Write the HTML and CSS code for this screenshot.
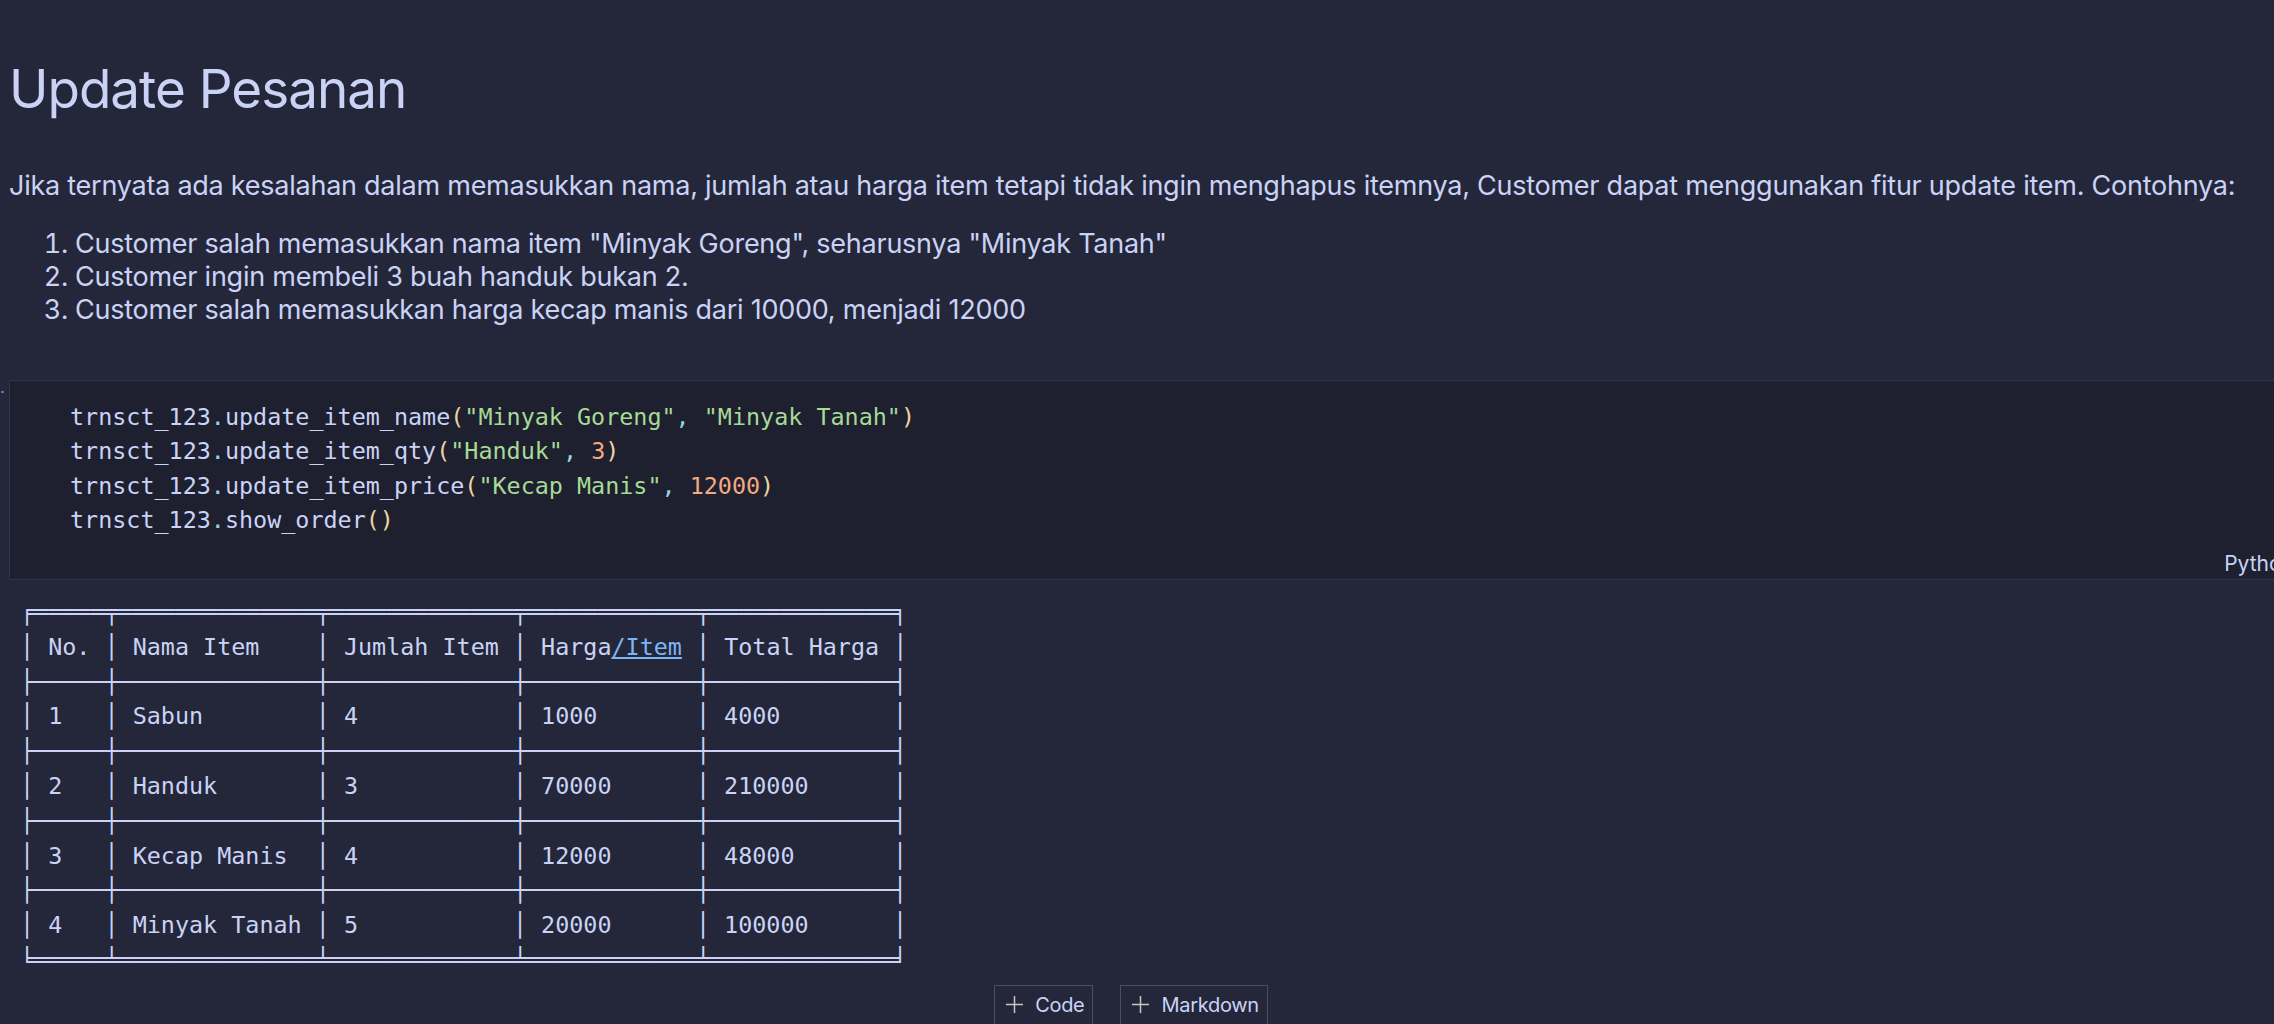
FILE: index.html
```html
<!DOCTYPE html>
<html lang="id">
<head>
<meta charset="utf-8">
<title>Update Pesanan</title>
<link rel="stylesheet" href="styles.css">
</head>
<body>
<div class="nb">
  <section class="md">
    <h1 class="title">Update Pesanan</h1>
    <p class="para">Jika ternyata ada kesalahan dalam memasukkan nama, jumlah atau harga item tetapi tidak ingin menghapus itemnya, Customer dapat menggunakan fitur update item. Contohnya:</p>
    <ol class="steps">
      <li>Customer salah memasukkan nama item "Minyak Goreng", seharusnya "Minyak Tanah"</li>
      <li>Customer ingin membeli 3 buah handuk bukan 2.</li>
      <li>Customer salah memasukkan harga kecap manis dari 10000, menjadi 12000</li>
    </ol>
  </section>

  <section class="code-cell">
    <span class="gutter-mark"></span>
    <pre class="code">trnsct_123<span class="p">.</span>update_item_name<span class="b">(</span><span class="s">"Minyak Goreng"</span><span class="p">,</span> <span class="s">"Minyak Tanah"</span><span class="b">)</span>
trnsct_123<span class="p">.</span>update_item_qty<span class="b">(</span><span class="s">"Handuk"</span><span class="p">,</span> <span class="n">3</span><span class="b">)</span>
trnsct_123<span class="p">.</span>update_item_price<span class="b">(</span><span class="s">"Kecap Manis"</span><span class="p">,</span> <span class="n">12000</span><span class="b">)</span>
trnsct_123<span class="p">.</span>show_order<span class="b">()</span></pre>
    <div class="cell-status"><span class="lang">Python</span></div>
  </section>

  <pre class="output">╒═════╤══════════════╤═════════════╤════════════╤═════════════╕
│ No. │ Nama Item    │ Jumlah Item │ Harga<span class="link">/Item</span> │ Total Harga │
├─────┼──────────────┼─────────────┼────────────┼─────────────┤
│ 1   │ Sabun        │ 4           │ 1000       │ 4000        │
├─────┼──────────────┼─────────────┼────────────┼─────────────┤
│ 2   │ Handuk       │ 3           │ 70000      │ 210000      │
├─────┼──────────────┼─────────────┼────────────┼─────────────┤
│ 3   │ Kecap Manis  │ 4           │ 12000      │ 48000       │
├─────┼──────────────┼─────────────┼────────────┼─────────────┤
│ 4   │ Minyak Tanah │ 5           │ 20000      │ 100000      │
╘═════╧══════════════╧═════════════╧════════════╧═════════════╛</pre>

  <div class="add-row">
    <button class="add-btn" type="button">
      <svg class="plus" viewBox="0 0 20 20" width="20" height="20" aria-hidden="true"><path d="M10 1v18M1 10h18" /></svg>
      <span>Code</span>
    </button>
    <button class="add-btn" type="button">
      <svg class="plus" viewBox="0 0 20 20" width="20" height="20" aria-hidden="true"><path d="M10 1v18M1 10h18" /></svg>
      <span>Markdown</span>
    </button>
  </div>
</div>
</body>
</html>
```

FILE: styles.css
```css
html, body {
  margin: 0;
  padding: 0;
}

body {
  background: #24273a;
  color: #cad3f5;
  font-family: Inter, "Noto Sans", sans-serif;
  overflow: hidden;
  width: 2274px;
  height: 1024px;
}

.nb {
  padding-left: 9px;
}

.md {
  padding-top: 51px;
}

.title {
  margin: 0;
  font-size: 53px;
  font-weight: 400;
  line-height: 77px;
  letter-spacing: -1px;
  color: #cad3f5;
}

.para {
  margin: 41px 0 0;
  font-size: 27px;
  line-height: 33px;
  letter-spacing: -0.25px;
  white-space: nowrap;
}

.steps {
  margin: 25px 0 0;
  padding-left: 66px;
  font-size: 27px;
  line-height: 33px;
  letter-spacing: -0.25px;
}

.code-cell {
  position: relative;
  margin-top: 54px;
  width: 2320px;
  height: 200px;
  box-sizing: border-box;
  background: #1e2030;
  border: 1px solid #30334a;
  display: flex;
  flex-direction: column;
}

.gutter-mark {
  position: absolute;
  left: -9px;
  top: 10px;
  width: 3px;
  height: 2px;
  background: #6e738d;
}

.code {
  margin: 0;
  padding: 19px 0 0 60px;
  font-family: "DejaVu Sans Mono", "Liberation Mono", monospace;
  font-size: 23.4px;
  line-height: 34.4px;
  color: #cad3f5;
  flex: 1;
}

.code .p { color: #91d7e3; }
.code .b { color: #eed49f; }
.code .s { color: #a6da95; }
.code .n { color: #f5a97f; }

.cell-status {
  display: flex;
  justify-content: flex-end;
  padding: 0 34px 3px 0;
}

.lang {
  font-size: 21px;
  line-height: 24px;
  color: #cad3f5;
}

.output {
  margin: 15px 0 0 11px;
  font-family: "DejaVu Sans Mono", "Liberation Mono", monospace;
  font-size: 23.4px;
  line-height: 34.8px;
  color: #cad3f5;
}

.output .link {
  color: #7db5f2;
  text-decoration: underline;
}

.add-row {
  display: flex;
  justify-content: center;
  gap: 27px;
  margin-top: 7px;
  padding-right: 21px;
}

.add-btn {
  display: inline-flex;
  align-items: center;
  gap: 11px;
  height: 40px;
  padding: 0 8px 0 10px;
  border: 1px solid #4b4e63;
  background: transparent;
  color: #cad3f5;
  font-family: Inter, "Noto Sans", sans-serif;
  font-size: 20px;
  letter-spacing: -0.3px;
}

.plus {
  width: 19px;
  height: 19px;
  fill: none;
  stroke: #c6c5bf;
  stroke-width: 1.6;
}
```
